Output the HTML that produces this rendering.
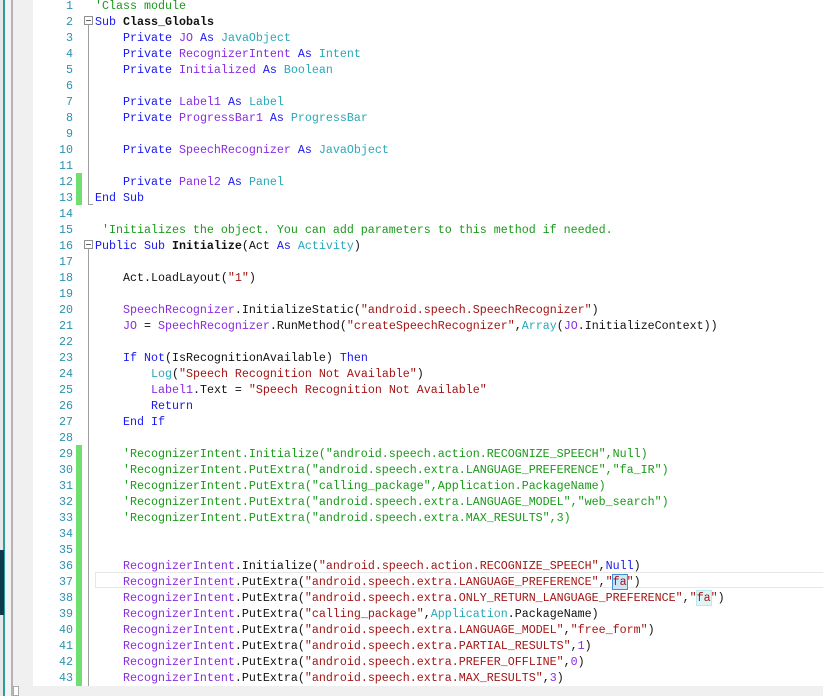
<!DOCTYPE html>
<html><head><meta charset="utf-8"><style>
html,body{margin:0;padding:0;width:823px;height:696px;overflow:hidden;background:#fff;position:relative}
.g1{position:absolute;left:0;top:0;width:3px;height:696px;background:#e8e8e8}
.g2{position:absolute;left:3px;top:0;width:2px;height:696px;background:#2a9d9d}
.g3{position:absolute;left:5px;top:0;width:6px;height:696px;background:#f4f4f4}
.dk{position:absolute;left:0;top:550px;width:4px;height:65px;background:#0f3a4e}
.g4{position:absolute;left:11px;top:0;width:2px;height:696px;background:#b4b4b4}
.gut{position:absolute;left:13px;top:0;width:20px;height:696px;background:#f0f0f0}
.ln{position:absolute;left:33px;width:40px;text-align:right;color:#2b91af;font:11.67px "Liberation Mono",monospace;height:16px;line-height:16px}
.cd{position:absolute;left:95px;white-space:pre;font:11.67px "Liberation Mono",monospace;height:16px;line-height:16px;color:#111}
.grn{position:absolute;left:76px;width:6px;background:#6fe06f}
.fl{position:absolute;left:88px;width:1px;background:#a0a0a0}
.fb{position:absolute;left:84px;width:7px;height:7px;border:1px solid #909090;background:#fff}
.fb:after{content:"";position:absolute;left:1px;top:3px;width:5px;height:1px;background:#606060}
.k{color:#1818f0}.v{color:#8a2be2}.t{color:#2aa8b8}.s{color:#a31515}.c{color:#1a9a1a}.b{font-weight:bold}.n{color:#8a2be2}
.cur{position:absolute;left:95px;top:572px;width:728px;height:14px;border:1px solid #e6e6e6}
.hs{position:absolute;left:13px;top:686px;width:810px;height:10px;background:#f0f0f0}
#tx{position:absolute;left:0;top:1px;width:823px;height:696px}
</style></head><body>
<div class="g1"></div><div class="g2"></div><div class="g3"></div><div class="dk"></div><div class="g4"></div><div class="gut"></div>
<div class="grn" style="top:173px;height:32px"></div>
<div class="grn" style="top:445px;height:245px"></div>
<div class="fl" style="top:21px;height:184px"></div>
<div style="position:absolute;left:88px;top:204px;width:5px;height:1px;background:#a0a0a0"></div>
<div class="fb" style="top:16px"></div>
<div class="fl" style="top:248px;height:440px"></div>
<div class="fb" style="top:240px"></div>
<div class="cur"></div>
<div id="tx">
<div class="ln" style="top:-3px">1</div><div class="cd" style="top:-3px"><span class="c">'Class module</span></div>
<div class="ln" style="top:13px">2</div><div class="cd" style="top:13px"><span class="k">Sub</span> <span class="b">Class_Globals</span></div>
<div class="ln" style="top:29px">3</div><div class="cd" style="top:29px">    <span class="k">Private</span> <span class="v">JO</span> <span class="k">As</span> <span class="t">JavaObject</span></div>
<div class="ln" style="top:45px">4</div><div class="cd" style="top:45px">    <span class="k">Private</span> <span class="v">RecognizerIntent</span> <span class="k">As</span> <span class="t">Intent</span></div>
<div class="ln" style="top:61px">5</div><div class="cd" style="top:61px">    <span class="k">Private</span> <span class="v">Initialized</span> <span class="k">As</span> <span class="t">Boolean</span></div>
<div class="ln" style="top:77px">6</div>
<div class="ln" style="top:93px">7</div><div class="cd" style="top:93px">    <span class="k">Private</span> <span class="v">Label1</span> <span class="k">As</span> <span class="t">Label</span></div>
<div class="ln" style="top:109px">8</div><div class="cd" style="top:109px">    <span class="k">Private</span> <span class="v">ProgressBar1</span> <span class="k">As</span> <span class="t">ProgressBar</span></div>
<div class="ln" style="top:125px">9</div>
<div class="ln" style="top:141px">10</div><div class="cd" style="top:141px">    <span class="k">Private</span> <span class="v">SpeechRecognizer</span> <span class="k">As</span> <span class="t">JavaObject</span></div>
<div class="ln" style="top:157px">11</div>
<div class="ln" style="top:173px">12</div><div class="cd" style="top:173px">    <span class="k">Private</span> <span class="v">Panel2</span> <span class="k">As</span> <span class="t">Panel</span></div>
<div class="ln" style="top:189px">13</div><div class="cd" style="top:189px"><span class="k">End Sub</span></div>
<div class="ln" style="top:205px">14</div>
<div class="ln" style="top:221px">15</div><div class="cd" style="top:221px"> <span class="c">'Initializes the object. You can add parameters to this method if needed.</span></div>
<div class="ln" style="top:237px">16</div><div class="cd" style="top:237px"><span class="k">Public Sub</span> <span class="b">Initialize</span>(Act <span class="k">As</span> <span class="t">Activity</span>)</div>
<div class="ln" style="top:253px">17</div>
<div class="ln" style="top:269px">18</div><div class="cd" style="top:269px">    Act.LoadLayout(<span class="s">"1"</span>)</div>
<div class="ln" style="top:285px">19</div>
<div class="ln" style="top:301px">20</div><div class="cd" style="top:301px">    <span class="v">SpeechRecognizer</span>.InitializeStatic(<span class="s">"android.speech.SpeechRecognizer"</span>)</div>
<div class="ln" style="top:317px">21</div><div class="cd" style="top:317px">    <span class="v">JO</span> = <span class="v">SpeechRecognizer</span>.RunMethod(<span class="s">"createSpeechRecognizer"</span>,<span class="t">Array</span>(<span class="v">JO</span>.InitializeContext))</div>
<div class="ln" style="top:333px">22</div>
<div class="ln" style="top:349px">23</div><div class="cd" style="top:349px">    <span class="k">If Not</span>(IsRecognitionAvailable) <span class="k">Then</span></div>
<div class="ln" style="top:365px">24</div><div class="cd" style="top:365px">        <span class="t">Log</span>(<span class="s">"Speech Recognition Not Available"</span>)</div>
<div class="ln" style="top:381px">25</div><div class="cd" style="top:381px">        <span class="v">Label1</span>.Text = <span class="s">"Speech Recognition Not Available"</span></div>
<div class="ln" style="top:397px">26</div><div class="cd" style="top:397px">        <span class="k">Return</span></div>
<div class="ln" style="top:413px">27</div><div class="cd" style="top:413px">    <span class="k">End If</span></div>
<div class="ln" style="top:429px">28</div>
<div class="ln" style="top:445px">29</div><div class="cd" style="top:445px">    <span class="c">'RecognizerIntent.Initialize("android.speech.action.RECOGNIZE_SPEECH",Null)</span></div>
<div class="ln" style="top:461px">30</div><div class="cd" style="top:461px">    <span class="c">'RecognizerIntent.PutExtra("android.speech.extra.LANGUAGE_PREFERENCE","fa_IR")</span></div>
<div class="ln" style="top:477px">31</div><div class="cd" style="top:477px">    <span class="c">'RecognizerIntent.PutExtra("calling_package",Application.PackageName)</span></div>
<div class="ln" style="top:493px">32</div><div class="cd" style="top:493px">    <span class="c">'RecognizerIntent.PutExtra("android.speech.extra.LANGUAGE_MODEL","web_search")</span></div>
<div class="ln" style="top:509px">33</div><div class="cd" style="top:509px">    <span class="c">'RecognizerIntent.PutExtra("android.speech.extra.MAX_RESULTS",3)</span></div>
<div class="ln" style="top:525px">34</div>
<div class="ln" style="top:541px">35</div>
<div class="ln" style="top:557px">36</div><div class="cd" style="top:557px">    <span class="v">RecognizerIntent</span>.Initialize(<span class="s">"android.speech.action.RECOGNIZE_SPEECH"</span>,<span class="k">Null</span>)</div>
<div class="ln" style="top:573px">37</div><div class="cd" style="top:573px">    <span class="v">RecognizerIntent</span>.PutExtra(<span class="s">"android.speech.extra.LANGUAGE_PREFERENCE"</span>,<span class="s">"<span style="background:#cde6f7;outline:1px solid #3a8fd6">fa</span>"</span>)</div>
<div class="ln" style="top:589px">38</div><div class="cd" style="top:589px">    <span class="v">RecognizerIntent</span>.PutExtra(<span class="s">"android.speech.extra.ONLY_RETURN_LANGUAGE_PREFERENCE"</span>,<span class="s">"<span style="background:#dff5f5;outline:1px solid #b8ecec">fa</span>"</span>)</div>
<div class="ln" style="top:605px">39</div><div class="cd" style="top:605px">    <span class="v">RecognizerIntent</span>.PutExtra(<span class="s">"calling_package"</span>,<span class="t">Application</span>.PackageName)</div>
<div class="ln" style="top:621px">40</div><div class="cd" style="top:621px">    <span class="v">RecognizerIntent</span>.PutExtra(<span class="s">"android.speech.extra.LANGUAGE_MODEL"</span>,<span class="s">"free_form"</span>)</div>
<div class="ln" style="top:637px">41</div><div class="cd" style="top:637px">    <span class="v">RecognizerIntent</span>.PutExtra(<span class="s">"android.speech.extra.PARTIAL_RESULTS"</span>,<span class="n">1</span>)</div>
<div class="ln" style="top:653px">42</div><div class="cd" style="top:653px">    <span class="v">RecognizerIntent</span>.PutExtra(<span class="s">"android.speech.extra.PREFER_OFFLINE"</span>,<span class="n">0</span>)</div>
<div class="ln" style="top:669px">43</div><div class="cd" style="top:669px">    <span class="v">RecognizerIntent</span>.PutExtra(<span class="s">"android.speech.extra.MAX_RESULTS"</span>,<span class="n">3</span>)</div>
</div>
<div class="hs"></div>
<div style="position:absolute;left:13px;top:686px;width:6px;height:10px;border:1px solid #aaa;background:#fff;box-sizing:border-box"></div>
</body></html>
